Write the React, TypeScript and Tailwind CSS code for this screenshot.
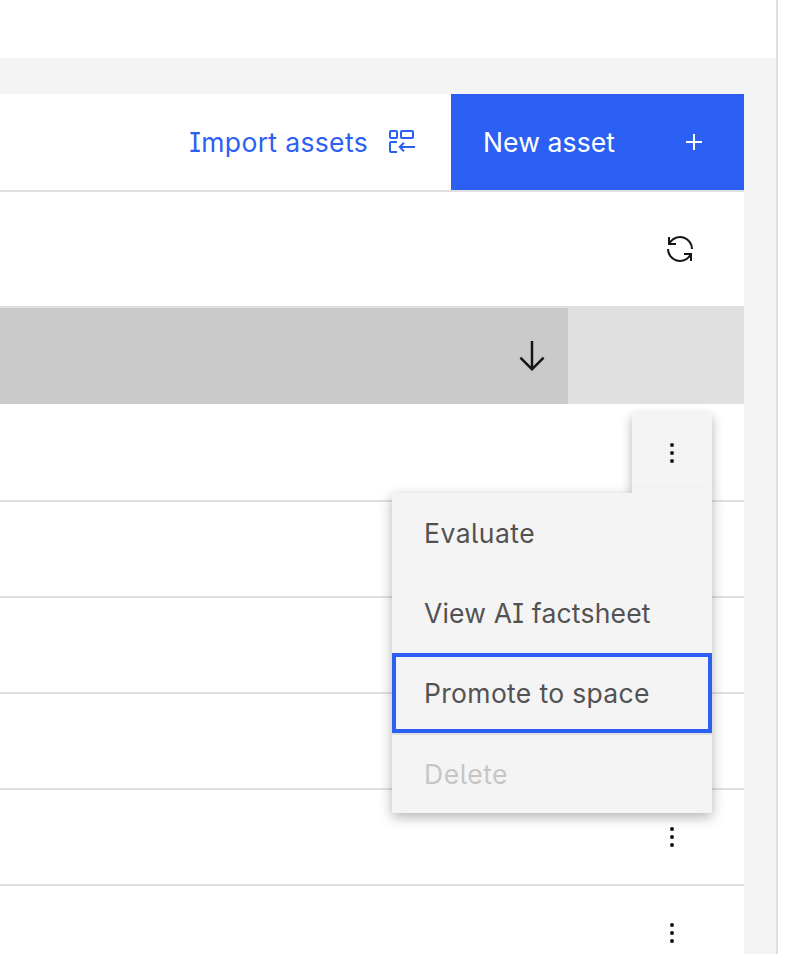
import type { ReactNode } from "react";

function ImportIcon() {
  return (
    <svg width="28" height="26" viewBox="0 0 28 26" fill="none" stroke="currentColor" strokeWidth="2">
      <rect x="2" y="2" width="7" height="7" rx="1" />
      <rect x="13" y="2" width="12" height="7" rx="1" />
      <path d="M9 13H3a1 1 0 0 0-1 1V22a1 1 0 0 0 1 1H9" />
      <path d="M27 18H12" />
      <path d="M16 13.7L11.7 18L16 22.3" />
    </svg>
  );
}

function RenewIcon() {
  return (
    <svg width="32" height="32" viewBox="0 0 32 32" fill="#161616">
      <path d="M12,10H6.78A11,11,0,0,1,27,16h2A13,13,0,0,0,6,7.68V4H4v8h8Z" />
      <path d="M20,22h5.22A11,11,0,0,1,5,16H3a13,13,0,0,0,23,8.32V28h2V20H20Z" />
    </svg>
  );
}

function ArrowDownIcon() {
  return (
    <svg width="40" height="40" viewBox="0 0 32 32" fill="#161616">
      <path d="M24.59 16.59L17 24.17 17 4 15 4 15 24.17 7.41 16.59 6 18 16 28 26 18z" />
    </svg>
  );
}

function OverflowIcon() {
  return (
    <svg width="32" height="32" viewBox="0 0 32 32" fill="#161616">
      <circle cx="16" cy="8" r="2" />
      <circle cx="16" cy="16" r="2" />
      <circle cx="16" cy="24" r="2" />
    </svg>
  );
}

function Row({ children }: { children?: ReactNode }) {
  return (
    <div className="flex h-24 shrink-0 items-center justify-end border-b-2 border-[#e0e0e0] pr-14">
      {children}
    </div>
  );
}

function MenuItem({ children, className }: { children: ReactNode; className: string }) {
  return (
    <button className={`flex w-full items-center whitespace-nowrap pl-8 text-left ${className}`}>
      {children}
    </button>
  );
}

export default function App() {
  return (
    <div className="relative flex h-[954px] w-[786px] overflow-hidden bg-white font-['Inter',sans-serif] text-[26.5px] leading-9 font-normal [font-feature-settings:'cv08','cv05']">
      <div className="flex w-[778px] flex-col border-r-2 border-[#e0e0e0] bg-[#f4f4f4]">
        <header className="h-[58px] shrink-0 bg-white" />
        <main className="mt-9 mr-8 flex min-h-0 flex-1 flex-col overflow-hidden bg-white">
          <div className="flex h-[98px] shrink-0 justify-end border-b-2 border-[#e0e0e0]">
            <button className="flex items-center gap-5 pr-[35px] text-[#2c60f5]">
              <span className="tracking-[0.35px]">Import assets</span>
              <ImportIcon />
            </button>
            <button className="flex w-[293px] items-center justify-between bg-[#2c60f5] pr-[42px] pl-8 text-white">
              <span className="tracking-[0.12px]">New asset</span>
              <svg width="16" height="16" viewBox="0 0 16 16" fill="currentColor">
                <path d="M7 0h2v7h7v2H9v7H7V9H0V7h7z" />
              </svg>
            </button>
          </div>
          <div className="flex h-[114px] shrink-0 items-center justify-end pr-12">
            <RenewIcon />
          </div>
          <div className="flex h-[98px] shrink-0 border-t-2 border-[#e0e0e0] bg-[#e0e0e0]">
            <div className="flex w-[568px] items-center justify-end bg-[#cacaca] pr-4">
              <ArrowDownIcon />
            </div>
          </div>
          <div className="h-0.5 shrink-0" />
          <Row />
          <Row />
          <Row />
          <Row />
          <Row>
            <OverflowIcon />
          </Row>
          <Row>
            <OverflowIcon />
          </Row>
        </main>
      </div>

      <div className="absolute top-[413px] left-[392px] flex w-80 flex-col items-end">
        <button className="flex h-20 w-20 items-center justify-center rounded-t-[3px] bg-[#f4f4f4] shadow-[0_4px_12px_rgba(0,0,0,0.3)]">
          <OverflowIcon />
        </button>
        <div className="relative h-80 w-full bg-[#f4f4f4] shadow-[0_4px_12px_rgba(0,0,0,0.3)]">
          <span className="absolute -top-1.5 right-0 h-1.5 w-20 bg-[#f4f4f4]" />
          <MenuItem className="h-20 tracking-[0.48px] text-[#525252]">Evaluate</MenuItem>
          <MenuItem className="h-20 tracking-[0.2px] text-[#525252]">View AI factsheet</MenuItem>
          <MenuItem className="h-20 tracking-[0.33px] text-[#525252] outline-4 -outline-offset-4 outline-[#2c60f5]">
            Promote to space
          </MenuItem>
          <div className="h-20 border-t-2 border-[#e0e0e0]">
            <MenuItem className="h-[78px] tracking-[0.55px] text-[#c6c6c6]">Delete</MenuItem>
          </div>
        </div>
      </div>
    </div>
  );
}
